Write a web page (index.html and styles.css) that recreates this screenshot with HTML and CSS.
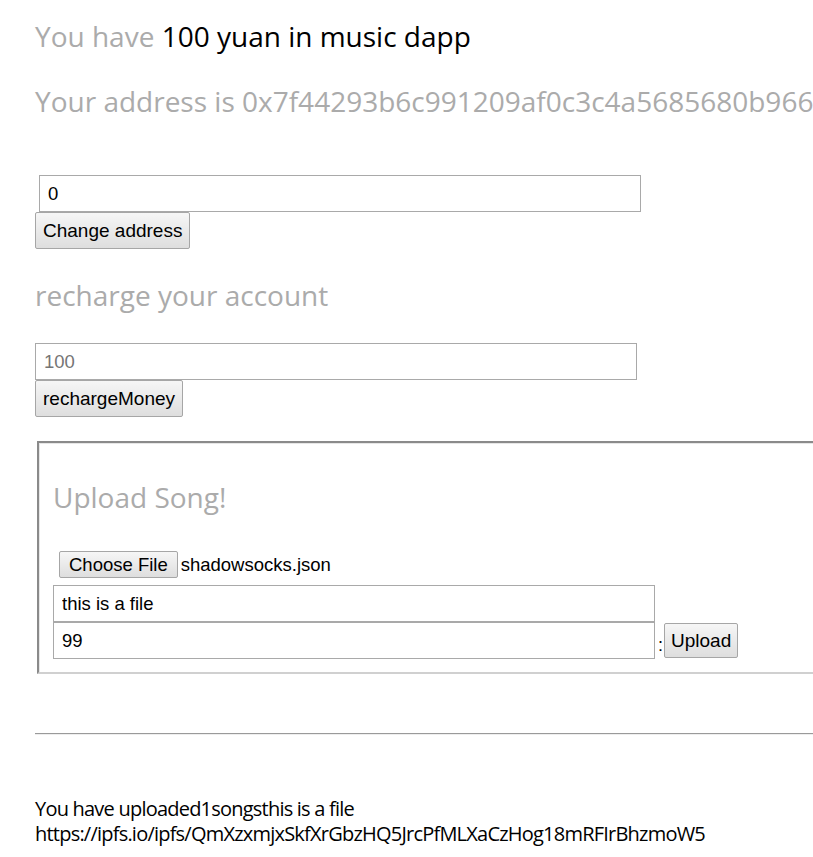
FILE: index.html
```html
<!DOCTYPE html>
<html>
<head>
<meta charset="utf-8">
<title>music dapp</title>
<link rel="stylesheet" href="styles.css">
</head>
<body>
<div class="page">
  <h1 class="title">You have <span class="amount">100 yuan in music dapp</span></h1>
  <h1 class="title address">Your address is 0x7f44293b6c991209af0c3c4a5685680b966a2f11</h1>

  <div class="form-block first">
    <input class="field shifted" type="text" value="0">
    <button class="btn">Change address</button>
  </div>

  <h3 class="title subtitle">recharge your account</h3>
  <div class="form-block">
    <input class="field" type="text" placeholder="100">
    <button class="btn">rechargeMoney</button>
  </div>

  <fieldset class="upload">
    <h2 class="title upload-title">Upload Song!</h2>
    <div class="file-row">
      <span class="file-btn">Choose File</span><span class="file-name">shadowsocks.json</span>
    </div>
    <input class="field" type="text" value="this is a file">
    <div class="price-row">
      <input class="field" type="text" value="99"><span class="colon">:</span><button class="btn upload-btn">Upload</button>
    </div>
  </fieldset>

  <hr class="divider">

  <div class="songs">
    <div>You have uploaded1songsthis is a file</div>
    <div>https://ipfs.io/ipfs/QmXzxmjxSkfXrGbzHQ5JrcPfMLXaCzHog18mRFIrBhzmoW5</div>
  </div>
</div>
</body>
</html>
```

FILE: styles.css
```css
html, body {
  margin: 0;
  padding: 0;
  background: #ffffff;
  overflow-x: hidden;
}

.page {
  width: 860px;
  padding: 18px 0 0 35px;
  font-family: "Liberation Sans", Arial, sans-serif;
  color: #000;
}

.title {
  font-family: "Open Sans", sans-serif;
  font-weight: 400;
  font-size: 28px;
  line-height: 36px;
  color: #ababab;
  margin: 0;
  white-space: nowrap;
}

.amount {
  color: #000;
}

.address {
  margin-top: 29px;
}

.form-block {
  display: flex;
  flex-direction: column;
  align-items: flex-start;
}

.form-block.first {
  margin-top: 56px;
}

.field {
  box-sizing: border-box;
  width: 602px;
  height: 37px;
  border: 1px solid #a9a9a9;
  padding: 0 8px;
  margin: 0;
  font-family: "Liberation Sans", Arial, sans-serif;
  font-size: 18.5px;
  color: #000;
  background: #fff;
  outline: none;
}

.field::placeholder {
  color: #757575;
}

.field.shifted {
  margin-left: 4px;
}

.btn {
  box-sizing: border-box;
  height: 37px;
  margin: 0;
  padding: 0 7px;
  border: 1px solid #a6a6a6;
  border-radius: 2px;
  background: linear-gradient(#f6f6f6, #dedede);
  font-family: "Liberation Sans", Arial, sans-serif;
  font-size: 19px;
  color: #000;
}

.subtitle {
  margin: 28px 0 30px;
}

.upload {
  box-sizing: border-box;
  width: 820px;
  margin: 24px 0 0 2px;
  padding: 0 12px 13px 14px;
  border-style: solid;
  border-width: 2px;
  border-color: #8a8a8a #d0d0d0 #d0d0d0 #8a8a8a;
  box-shadow: inset 1px 1px 0 #e6e6e6;
}

.upload-title {
  margin-top: 36px;
}

.file-row {
  display: flex;
  align-items: center;
  margin: 36px 0 7px 6px;
  height: 27px;
}

.file-btn {
  box-sizing: border-box;
  height: 27px;
  line-height: 25px;
  padding: 0 9px;
  border: 1px solid #a6a6a6;
  border-radius: 2px;
  background: linear-gradient(#f6f6f6, #dedede);
  font-size: 18.5px;
}

.file-name {
  margin-left: 3px;
  font-size: 18.5px;
}

.price-row {
  display: flex;
  align-items: flex-end;
}

.colon {
  font-size: 18px;
  margin: 0 1px 0 3px;
  line-height: 28px;
}

.upload-btn {
  height: 35px;
  margin-bottom: 1px;
  padding: 0 6px;
}

.divider {
  margin: 59px 0 0 0;
  height: 0;
  border: 0;
  border-top: 1px solid #9a9a9a;
  border-bottom: 1px solid #eeeeee;
}

.songs {
  margin-top: 61px;
  font-family: "Open Sans", sans-serif;
  font-size: 20px;
  line-height: 25px;
  letter-spacing: -0.78px;
  color: #000;
}
```
